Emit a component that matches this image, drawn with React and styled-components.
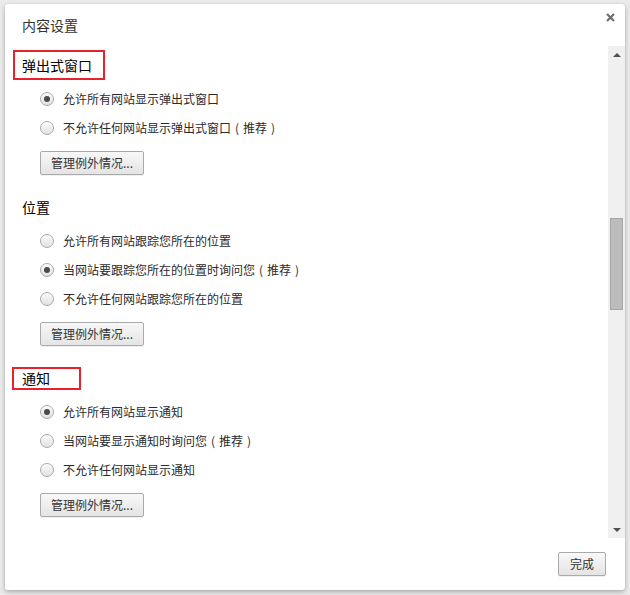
// Libs & Frameworks
import styled, { createGlobalStyle } from "styled-components";

// Style
const Global = createGlobalStyle`
  html, body {
    margin: 0;
    padding: 0;
  }
  body {
    width: 630px;
    height: 595px;
    background: #ebebeb;
    font-family: "Noto Sans CJK SC", "Noto Sans", sans-serif;
    overflow: hidden;
  }
`;

const Page = styled.div`
  padding: 4px 5px 5px;
  box-sizing: border-box;
  height: 595px;
`;

const Dialog = styled.section`
  width: 620px;
  height: 586px;
  background: #fff;
  border-radius: 2px 3px 3px 2px;
  box-shadow: 0 2px 5px rgba(0, 0, 0, 0.28), 0 0 1px rgba(0, 0, 0, 0.2);
  display: flex;
  flex-direction: column;
  overflow: hidden;
`;

const Header = styled.header`
  height: 42px;
  flex: none;
  display: flex;
  justify-content: space-between;
  align-items: center;
  padding: 0 10px 0 17px;
`;

const Title = styled.h1`
  margin: 0;
  font-size: 14px;
  line-height: 20px;
  font-weight: normal;
  color: #333;
`;

const Close = styled.button`
  align-self: flex-start;
  margin-top: 9px;
  width: 9px;
  height: 9px;
  padding: 0;
  border: none;
  background: none;
  display: flex;
`;

const Body = styled.div`
  flex: 1;
  display: flex;
  min-height: 0;
`;

const Content = styled.div`
  flex: 1;
  overflow: hidden;
  padding: 9px 17px 0;
`;

const Section = styled.div`
  display: flex;
  flex-direction: column;
  align-items: flex-start;
  margin-bottom: 22px;
`;

const Heading = styled.h2`
  position: relative;
  margin: 0 0 9px;
  font-size: 14px;
  line-height: 20px;
  font-weight: normal;
  color: #000;

  ${({ $box }) =>
    $box &&
    `
    &::before {
      content: "";
      position: absolute;
      top: ${$box[0]}px;
      right: ${$box[1]}px;
      bottom: ${$box[2]}px;
      left: ${$box[3]}px;
      border: 2px solid #e8222c;
    }
  `}
`;

const Options = styled.div`
  display: flex;
  flex-direction: column;
  align-items: flex-start;
  padding-left: 18px;
`;

const Row = styled.label`
  height: 29px;
  display: flex;
  align-items: center;
  gap: 9px;
  font-size: 12px;
  color: #2b2b2b;
`;

const Radio = styled.span`
  width: 12px;
  height: 12px;
  border-radius: 50%;
  border: 1px solid #a9a9a9;
  background: linear-gradient(#fafafa, #e2e2e2);
  box-shadow: inset 0 1px 1px rgba(255, 255, 255, 0.8);
  display: flex;
  align-items: center;
  justify-content: center;

  &::after {
    content: "";
    width: 6px;
    height: 6px;
    border-radius: 50%;
    background: #4a4a4a;
    display: ${({ $checked }) => ($checked ? "block" : "none")};
  }
`;

const Paren = styled.span`
  display: inline-block;
  width: 12px;
  text-align: center;
`;

const Button = styled.button`
  height: 24px;
  padding: 0 ${({ $pad }) => $pad || 10}px;
  margin-top: ${({ $top }) => $top || 0}px;
  border: 1px solid #aaa;
  border-radius: 2px;
  background: linear-gradient(#f8f8f8, #e4e4e4);
  box-shadow: 0 1px 0 rgba(0, 0, 0, 0.06);
  font-family: inherit;
  font-size: 12px;
  line-height: 20px;
  color: #333;
`;

const Scrollbar = styled.div`
  width: 17px;
  flex: none;
  background: #f0f0f0;
  display: flex;
  flex-direction: column;
`;

const Arrow = styled.div`
  height: 17px;
  flex: none;
  display: flex;
  justify-content: center;
  align-items: center;
  &::after {
    content: "";
    border-left: 4px solid transparent;
    border-right: 4px solid transparent;
    ${({ $down }) =>
      $down ? "border-top: 4px solid #505050;" : "border-bottom: 4px solid #505050;"}
  }
`;

const Track = styled.div`
  flex: 1;
  padding: 0 2px;
`;

const Thumb = styled.div`
  height: 92px;
  box-sizing: border-box;
  background: #bcbcbc;
  border: 1px solid #a6a6a6;
`;

const Footer = styled.footer`
  height: 52px;
  flex: none;
  display: flex;
  justify-content: flex-end;
  align-items: center;
  padding: 0 19px;
`;

// Data
const sections = [
  {
    title: "弹出式窗口",
    box: [-5, -13, -5, -9],
    options: [
      { text: "允许所有网站显示弹出式窗口" },
      { text: "不允许任何网站显示弹出式窗口", note: "推荐" },
    ],
    checked: 0,
  },
  {
    title: "位置",
    options: [
      { text: "允许所有网站跟踪您所在的位置" },
      { text: "当网站要跟踪您所在的位置时询问您", note: "推荐" },
      { text: "不允许任何网站跟踪您所在的位置" },
    ],
    checked: 1,
  },
  {
    title: "通知",
    box: [-1, -31, -2, -10],
    options: [
      { text: "允许所有网站显示通知" },
      { text: "当网站要显示通知时询问您", note: "推荐" },
      { text: "不允许任何网站显示通知" },
    ],
    checked: 0,
  },
];

const scrollRatio = 0.424;

// JSX
const App = () => {
  const trackSpace = 492 - 34 - 92;
  return (
    <Page>
      <Global />
      <Dialog>
        <Header>
          <Title>内容设置</Title>
          <Close aria-label="关闭">
            <svg width="9" height="9" viewBox="0 0 9 9">
              <path d="M1 1L8 8M8 1L1 8" stroke="#6f6f6f" strokeWidth="2.2" />
            </svg>
          </Close>
        </Header>
        <Body>
          <Content>
            {sections.map((s) => (
              <Section key={s.title}>
                <Heading $box={s.box}>{s.title}</Heading>
                <Options>
                  {s.options.map((o, i) => (
                    <Row key={o.text}>
                      <Radio $checked={i === s.checked} />
                      <span>
                        {o.text}
                        {o.note && (
                          <>
                            <Paren>(</Paren>
                            {o.note}
                            <Paren>)</Paren>
                          </>
                        )}
                      </span>
                    </Row>
                  ))}
                  <Button $top={9}>管理例外情况...</Button>
                </Options>
              </Section>
            ))}
          </Content>
          <Scrollbar>
            <Arrow />
            <Track>
              <Thumb style={{ marginTop: Math.round(trackSpace * scrollRatio) }} />
            </Track>
            <Arrow $down />
          </Scrollbar>
        </Body>
        <Footer>
          <Button $pad={11}>完成</Button>
        </Footer>
      </Dialog>
    </Page>
  );
};

export default App;
